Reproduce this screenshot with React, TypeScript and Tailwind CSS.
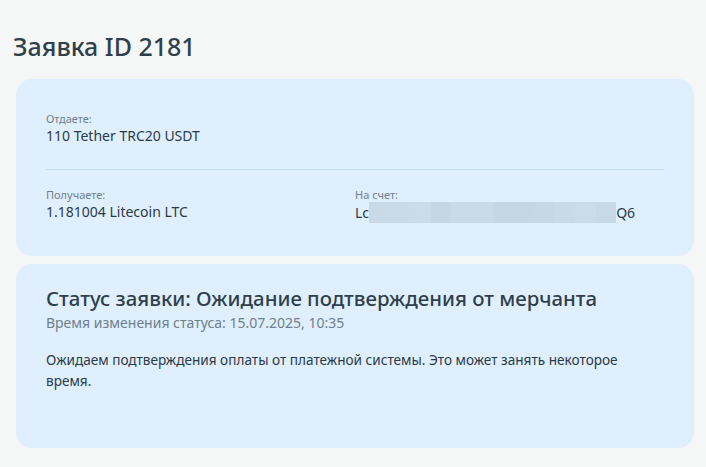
import React from "react";

const blurShades = [
  "bg-[#c9d9e7]",
  "bg-[#cadbe8]",
  "bg-[#cbdbe8]",
  "bg-[#c6d7e4]",
  "bg-[#cadae7]",
  "bg-[#cadae7]",
  "bg-[#c6d6e3]",
  "bg-[#c6d6e3]",
  "bg-[#c7d7e4]",
  "bg-[#c9d9e6]",
  "bg-[#cbdbe8]",
  "bg-[#c8d8e5]",
];

function Field({ label, children }: { label: string; children: React.ReactNode }) {
  return (
    <div className="flex flex-col">
      <span className="text-[11px] leading-[14px] text-[#6f7f8c]">{label}</span>
      <span className="text-[14px] leading-[20px] text-[#2b3a46]">{children}</span>
    </div>
  );
}

export default function App() {
  return (
    <div
      className="min-h-[467px] w-[706px] bg-[#f5f7f7] pl-4 pr-3 pt-[30px] pb-4"
      style={{ fontFamily: "'Noto Sans', sans-serif" }}
    >
      <h1 className="-ml-[3px] text-[25px] leading-[32px] font-medium text-[#2f3f4b]">Заявка ID 2181</h1>

      <div className="mt-[17px] flex flex-col gap-2">
        <div className="rounded-[16px] bg-[#dfeffe] px-[30px] pt-[33px] pb-[33px]">
          <Field label="Отдаете:">110 Tether TRC20 USDT</Field>
          <div className="mt-[23px] h-px bg-[#c6dcef]" />
          <div className="mt-[18px] grid grid-cols-[309px_1fr]">
            <Field label="Получаете:">1.181004 Litecoin LTC</Field>
            <Field label="На счет:">
              <span className="flex items-center">
                Lc
                <span className="flex h-[21px]">
                  {blurShades.map((c, i) => (
                    <span key={i} className={`block h-full w-[20.6px] ${c}`} />
                  ))}
                </span>
                Q6
              </span>
            </Field>
          </div>
        </div>

        <div className="h-[184px] rounded-[16px] bg-[#dfeffe] px-[30px] pt-[20px]">
          <h2 className="text-[20.4px] leading-[28px] font-medium text-[#2f3f4b]">
            Статус заявки: Ожидание подтверждения от мерчанта
          </h2>
          <p className="mt-[1px] text-[14px] leading-[20px] text-[#6f7f8c]">
            Время изменения статуса: 15.07.2025, 10:35
          </p>
          <p className="mt-[16px] text-[13.6px] leading-[21px] text-[#2b3a46]">
            Ожидаем подтверждения оплаты от платежной системы. Это может занять некоторое время.
          </p>
        </div>
      </div>
    </div>
  );
}
